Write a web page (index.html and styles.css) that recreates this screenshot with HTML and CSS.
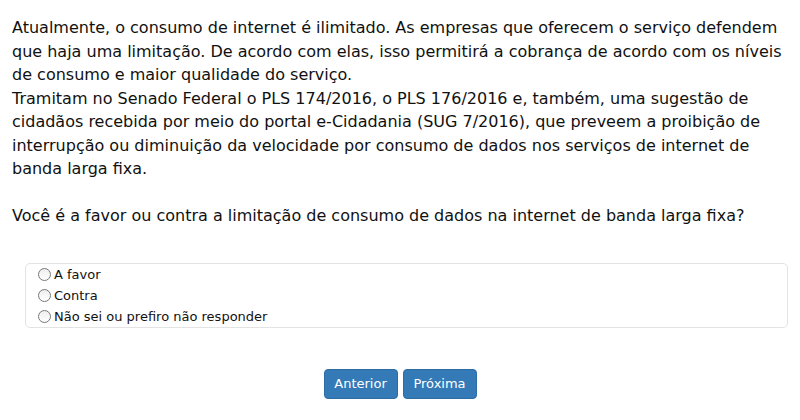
FILE: index.html
```html
<!DOCTYPE html>
<html lang="pt-BR">
<head>
  <meta charset="UTF-8" />
  <title>Consulta Pública</title>
  <link rel="stylesheet" href="styles.css">
</head>
<body>
  <main class="survey">
    <p class="intro">
      Atualmente, o consumo de internet é ilimitado. As empresas que oferecem o serviço defendem que haja uma limitação. De acordo com elas, isso permitirá a cobrança de acordo com os níveis de consumo e maior qualidade do serviço.<br>
      Tramitam no Senado Federal o PLS 174/2016, o PLS 176/2016 e, também, uma sugestão de cidadãos recebida por meio do portal e-Cidadania (SUG 7/2016), que preveem a proibição de interrupção ou diminuição da velocidade por consumo de dados nos serviços de internet de banda larga fixa.
    </p>
    <p class="question">Você é a favor ou contra a limitação de consumo de dados na internet de banda larga fixa?</p>

    <div class="options">
      <label class="option"><input type="radio" name="resposta" value="favor"> A favor</label>
      <label class="option"><input type="radio" name="resposta" value="contra"> Contra</label>
      <label class="option"><input type="radio" name="resposta" value="ns"> Não sei ou prefiro não responder</label>
    </div>

    <div class="actions">
      <button class="btn">Anterior</button>
      <button class="btn">Próxima</button>
    </div>
  </main>
</body>
</html>
```

FILE: styles.css
```css
* {
  margin: 0; padding: 0; box-sizing: border-box;
}
body {
  font-family: 'DejaVu Sans', Verdana, sans-serif;
  background: #fff;
  color: #111;
}

.survey {
  padding: 16px 12px 0 12px;
}
.intro,
.question {
  font-size: 16px;
  line-height: 23.5px;
}
.question {
  margin-top: 23.5px;
}

/* radio list */
.options {
  margin: 35px 0 0 13px;
  border: 1px solid #e3e3e3;
  border-radius: 5px;
  padding: 0 0 0 12px;
  display: flex;
  flex-direction: column;
}
.option {
  font-size: 13px;
  line-height: 21px;
  display: flex;
  align-items: center;
  gap: 3px;
}
.option input {
  appearance: none;
  width: 13px;
  height: 13px;
  border: 1px solid #777;
  border-radius: 50%;
  background: linear-gradient(to bottom, #eee, #fff);
}

/* nav buttons */
.actions {
  margin-top: 41px;
  display: flex;
  justify-content: center;
  gap: 5px;
}
.btn {
  font-family: 'DejaVu Sans', Verdana, sans-serif;
  font-size: 13px;
  color: #fff;
  background: #337ab7;
  border: 1px solid #2e6da4;
  border-radius: 4px;
  height: 30px;
  width: 74px;
  cursor: pointer;
}
```
